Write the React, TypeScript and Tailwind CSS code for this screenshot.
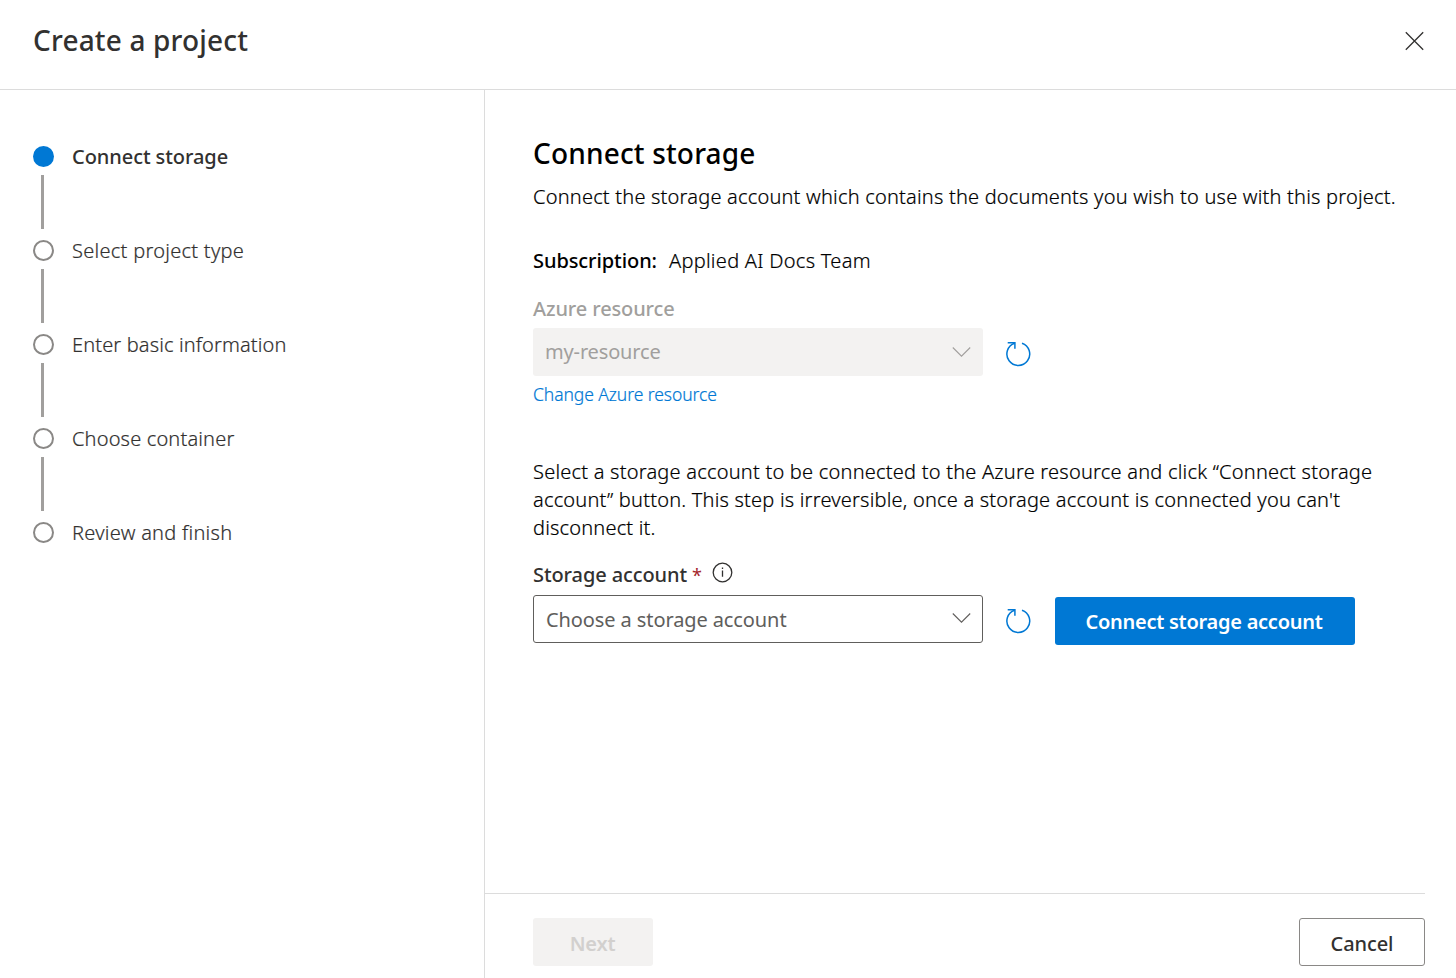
const steps = [
  { label: "Connect storage", tracking: "tracking-[-0.07px]" },
  { label: "Select project type", tracking: "tracking-[0.28px]" },
  { label: "Enter basic information", tracking: "tracking-[0.13px]" },
  { label: "Choose container", tracking: "tracking-[0.16px]" },
  { label: "Review and finish", tracking: "tracking-[0.27px]" },
];

function Chevron() {
  return (
    <svg width="20" height="12" viewBox="0 0 20 12" fill="none" stroke="currentColor" strokeWidth="1.1">
      <path d="M1.8 1.5 10.5 10.2l8.7-8.7" />
    </svg>
  );
}

function Refresh() {
  return (
    <svg width="27" height="27" viewBox="0 0 27 27" fill="none" stroke="currentColor" strokeWidth="1.5">
      <path d="M17 2.2A11.4 11.4 0 1 1 9.6 2.2" />
      <path d="M2.7 1.7h7.200v6" />
    </svg>
  );
}

function Info() {
  return (
    <svg width="21" height="21" viewBox="0 0 21 21" fill="none" stroke="#323130" strokeWidth="1.3">
      <circle cx="10.5" cy="10.5" r="9.3" />
      <path d="M10.5 8.5v6.2M10.5 5.6v1.5" />
    </svg>
  );
}

export default function App() {
  return (
    <div className="flex h-[978px] w-[1456px] flex-col overflow-hidden bg-white font-['Noto_Sans',sans-serif] text-[20px] whitespace-nowrap text-[#323130]">
      <header className="flex h-[90px] shrink-0 items-start justify-between border-b border-[#dcdcdc] pr-8 pl-[33px]">
        <h1 className="mt-5 text-[28px] leading-10 font-medium tracking-[0.17px]">Create a project</h1>
        <button aria-label="Close" className="mt-[31px]">
          <svg width="19" height="20" viewBox="0 0 19 20" stroke="#323130" strokeWidth="1.3">
            <path d="M.8 1.3l17.4 17.4M18.2 1.3.8 18.7" />
          </svg>
        </button>
      </header>
      <div className="flex min-h-0 grow">
        <nav className="w-[485px] shrink-0 border-r border-[#dcdcdc] pt-[53px] pl-[33px]">
          <ol>
            {steps.map(({ label, tracking }, i) => (
              <li key={label} className="flex h-[94px] gap-[18px]">
                <div className="flex w-[21px] flex-col">
                  <span className={i === 0 ? "mt-[3px] size-[21px] rounded-full bg-[#0078d4]" : "mt-[3px] size-[21px] rounded-full border-2 border-[#8a8886]"} />
                  {i < steps.length - 1 && <span className="mt-2 ml-2 h-[54px] w-[3px] bg-[#a19f9d]" />}
                </div>
                <span className={`leading-7 ${tracking} ${i === 0 ? "font-medium" : "font-light [-webkit-text-stroke:0.2px]"}`}>{label}</span>
              </li>
            ))}
          </ol>
        </nav>
        <main className="flex grow flex-col pr-[31px]">
          <div className="grow pl-12 text-black">
            <h2 className="mt-[43px] text-[28px] leading-10 font-medium tracking-[0.17px]">Connect storage</h2>
            <p className="mt-2.5 leading-7 font-light tracking-[0.2px] [-webkit-text-stroke:0.2px]">
              Connect the storage account which contains the documents you wish to use with this project.
            </p>
            <p className="mt-9 flex gap-3 leading-7">
              <span className="font-medium tracking-[-0.08px]">Subscription:</span>
              <span className="font-light tracking-[0.28px] [-webkit-text-stroke:0.2px]">Applied AI Docs Team</span>
            </p>
            <p className="mt-5 leading-7 font-medium tracking-[-0.12px] text-[#a19f9d]">Azure resource</p>
            <div className="mt-[5px] flex">
              <div className="flex h-12 w-[450px] items-center justify-between rounded-[3px] bg-[#f3f2f1] px-3 text-[#a19f9d]">
                <span className="tracking-[-0.15px]">my-resource</span>
                <Chevron />
              </div>
              <button aria-label="Refresh resources" className="mt-[13px] ml-[22px] h-[27px] text-[#0078d4]"><Refresh /></button>
            </div>
            <a className="mt-1 block text-[17.5px] leading-7 font-light tracking-[-0.08px] text-[#0078d4] [-webkit-text-stroke:0.2px]">Change Azure resource</a>
            <p className="mt-[50px] leading-7 font-light [-webkit-text-stroke:0.2px]">
              <span className="tracking-[0.22px]">Select a storage account to be connected to the Azure resource and click “Connect storage</span><br />
              <span className="tracking-[0.2px]">account” button. This step is irreversible, once a storage account is connected you can't</span><br />
              <span className="tracking-[0.18px]">disconnect it.</span>
            </p>
            <div className="mt-[19px] flex leading-7 text-[#323130]">
              <span className="font-medium tracking-[-0.1px]">Storage account</span>
              <span className="ml-[5px] w-[11px] text-[18px] text-[#a4262c]">*</span>
              <span className="mt-px ml-[9px]"><Info /></span>
            </div>
            <div className="mt-[6px] flex">
              <div className="flex h-12 w-[450px] items-center justify-between rounded-[3px] border border-[#605e5c] pr-[11px] pl-3 text-[#605e5c]">
                <span className="pt-0.5 tracking-[-0.1px]">Choose a storage account</span>
                <span className="pb-0.5"><Chevron /></span>
              </div>
              <button aria-label="Refresh storage accounts" className="mt-[13px] ml-[22px] h-[27px] text-[#0078d4]"><Refresh /></button>
              <button className="mt-0.5 ml-[23px] h-12 w-[300px] rounded-[3px] bg-[#0078d4] pt-0.5 pr-0.5 font-semibold tracking-[-0.26px] text-white">Connect storage account</button>
            </div>
          </div>
          <footer className="flex h-[85px] shrink-0 justify-between border-t border-[#dcdcdc] pt-6 pl-12">
            <button className="h-12 w-[120px] rounded-[3px] bg-[#f3f2f1] pt-[3px] pr-px font-semibold tracking-[-0.2px] text-[#d2d0ce]">Next</button>
            <button className="h-12 w-[126px] rounded-[3px] border border-[#8a8886] pt-[3px] font-medium tracking-[-0.1px]">Cancel</button>
          </footer>
        </main>
      </div>
    </div>
  );
}
